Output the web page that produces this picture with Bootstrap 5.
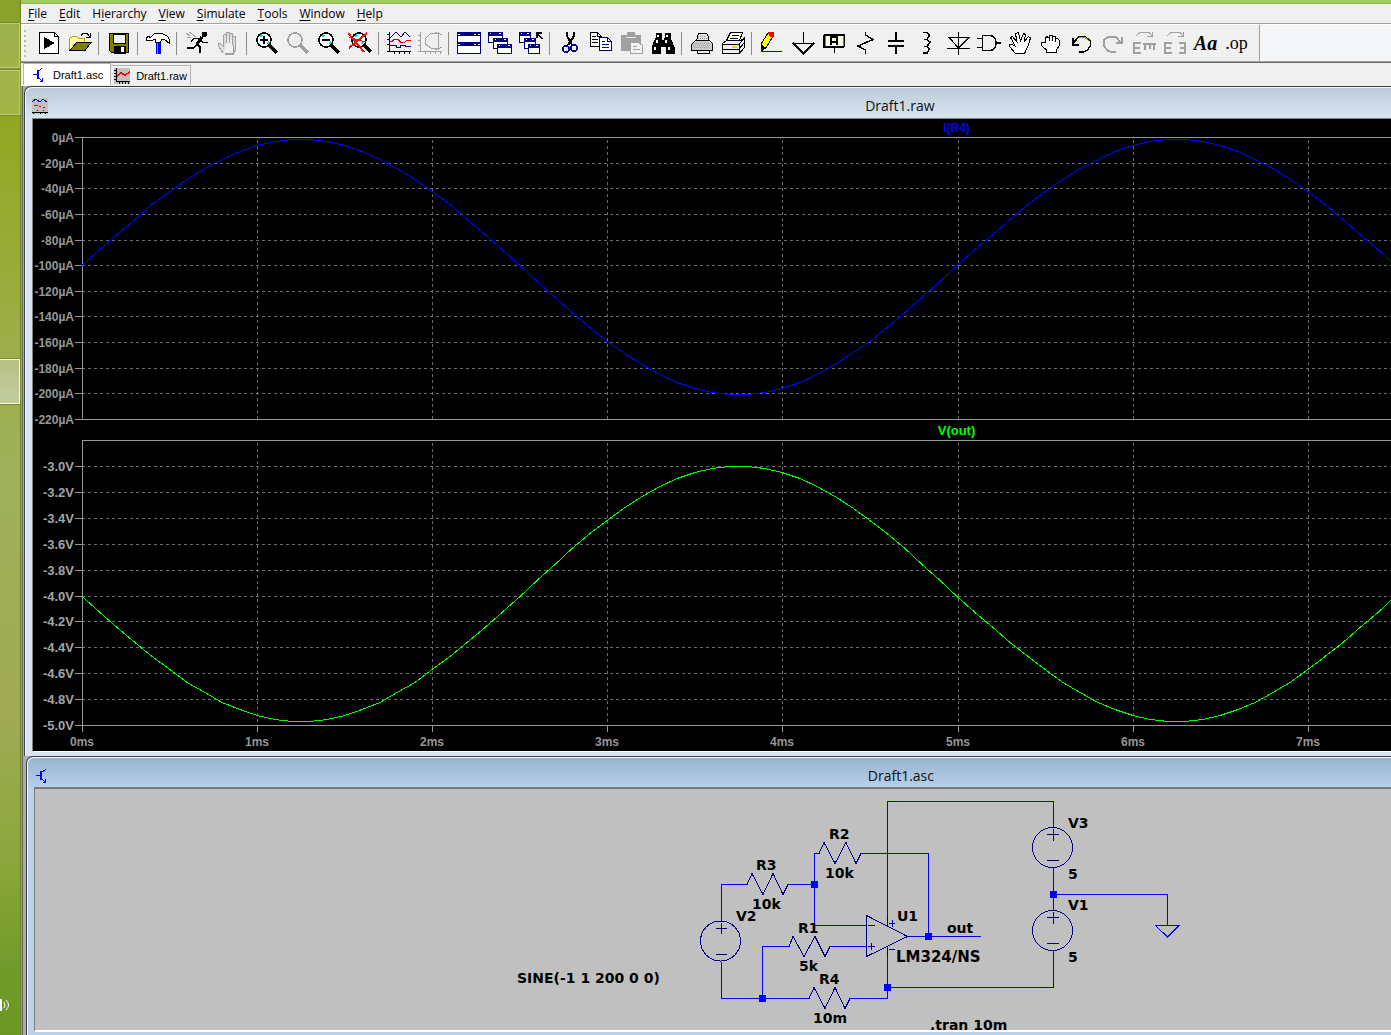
<!DOCTYPE html>
<html lang="en">
<head>
<meta charset="utf-8">
<meta name="viewport" content="width=device-width, initial-scale=1">
<title>Draft1 - circuit simulator</title>
<link href="https://cdn.jsdelivr.net/npm/bootstrap@5.3.0/dist/css/bootstrap.min.css" rel="stylesheet">
<style>
  body { font-family: "Open Sans", "Noto Sans", sans-serif; font-size: 12px; line-height: 16px; color: #000; background: #f0f0f0; }
  .desk { width: 21px; background: linear-gradient(#8ba02a 0, #92a824 13%, #9cae45 32%, #a0b05a 45%, #9fab54 70%, #8aa63a 84%, #70992a 94%, #6d9724 100%); border-right: 1px solid #6f8220; padding-top: 23px; }
  .task-btn { display: block; width: 20px; height: 45px; margin-bottom: 2px; padding: 0; border: 1px solid #bccb7a; border-left: 0; background: rgba(255,255,255,.16); outline: 1px solid #7d8f2c; outline-offset: 0; }
  .task-btn.active-task { margin-top: 242px; background: linear-gradient(#b7c184, #c3cca0); border-color: #f4f7e4; }
  .tray { margin-top: auto; margin-bottom: 22px; }
  .frame-top { height: 4px; background: #a3cc60; border-bottom: 1px solid #8fb850; }
  .menu-strip { height: 20px; padding-left: 7px; column-gap: 12px; border-bottom: 1px solid #a0a0a0; }
  .menu-strip a { color: #000; text-decoration: none; }
  .menu-strip u { text-underline-offset: 2px; }
  .tool-strip { height: 38px; padding-left: 3px; border-top: 1px solid #fff; border-bottom: 1px solid #a0a0a0; background: #f5f6f8; }
  .tool-band { background: #f0f0f0; border-right: 1px solid #a0a0a0; padding: 0 7px 0 0; }
  .grip { width: 2px; height: 27px; margin-right: 7px; background: repeating-linear-gradient(#bcbcbc 0 2px, transparent 2px 5px); }
  .tool-band button { width: 31px; height: 34px; padding: 0; border: 0; background: none; display: flex; align-items: center; justify-content: center; }
  .tool-band .rule { width: 1px; height: 23px; margin: 0 4px 0 3px; background: #8c8c8c; }
  .tool-band svg, .doc-tabs svg, .title-strip svg, .sheet-svg { shape-rendering: crispEdges; }
  .tool-band svg { width: 24px; height: 24px; fill: none; stroke: #000; stroke-width: 1; }
  .tool-band .script-face { font: italic bold 20px/24px "Liberation Serif", serif; }
  .tool-band .op-face { font: 18px/24px "Liberation Serif", serif; }
  .doc-tabs { height: 24px; border-top: 1px solid #696969; padding-left: 2px; background: #f0f0f0; font: 11px/16px "Liberation Sans", sans-serif; }
  .doc-tabs a { color: #000; text-decoration: none; border: 1px solid #b4b4b4; border-bottom: 0; column-gap: 6px; }
  .doc-tabs .front-tab { height: 22px; margin-top: 0; padding: 0 7px; background: #fff; }
  .doc-tabs .back-tab { height: 20px; margin-top: 2px; padding: 0 3px; border-left: 0; }
  .mdi { border-left: 1px solid #a0a0a0; box-shadow: inset 1px 0 #606060; padding-left: 2px; background: #ababab; overflow: hidden; }
  .mdi-win { width: 128%; border: 1px solid #404040; border-right: 0; border-bottom: 0; border-radius: 7px 0 0 0; padding: 0 0 4px 7px; box-shadow: inset 1px 1px #f4f8fc; }
  .mdi-win .title-strip { display: grid; grid-template-columns: 24px 1fr 30px; align-items: center; font-size: 14px; height: 31px; padding-top: 7px; color: #111; }
  .win-plot { background: linear-gradient(#bccad8 0, #d9e5f2 32px); }
  .win-sheet { background: linear-gradient(#98b3d1 0, #b9d1ea 32px); margin-left: 2px; }
  .win-sheet .title-strip { grid-template-columns: 22px 1fr 30px; height: 30px; }
  .pane { border: 1px solid #808080; border-width: 1px 0 1px 1px; border-bottom-color: #fff; }
  .plot-pane { background: #000; height: 634px; }
  .sheet-pane { background: #c0c0c0; height: 245px; border-width: 2px 0 2px 1px; border-color: #7a7a7a; border-bottom-color: #fff; }
  svg.surface { display: block; width: 100%; height: 100%; overflow: hidden; }
  svg.sheet-svg { overflow: visible; }
  .plot-pane text { font: bold 12px "Liberation Sans", sans-serif; fill: #969696; }
  .plot-pane .lower text { font-size: 13px; fill: #a4a4a4; }
  .plot-pane .axis { stroke: #969696; fill: none; }
  .plot-pane .dashes { stroke: #6c6c6c; stroke-dasharray: 3 3; }
  .plot-pane .trace { fill: none; stroke-width: 1; }
  .sheet-svg text { font: bold 14px "DejaVu Sans", sans-serif; fill: #000; }
  .sheet-svg .model-name { font-size: 15px; }
  .sheet-svg .wire { stroke: #0000ff; fill: none; }
  .sheet-svg .part { stroke: #000080; fill: none; }
  .sheet-svg .node { fill: #0000ff; }
</style>
<script src="https://cdn.jsdelivr.net/npm/bootstrap@5.3.0/dist/js/bootstrap.bundle.min.js"></script>
</head>
<body>
<div class="d-flex vh-100 overflow-hidden">
  <aside class="desk d-flex flex-column flex-shrink-0">
    <button class="task-btn" aria-label="Task 1"></button>
    <button class="task-btn" aria-label="Task 2"></button>
    <button class="task-btn active-task" aria-label="Task 3"></button>
    <svg class="tray" width="12" height="16" fill="none" stroke="#fff"><path d="M0 5V11M1 2V14" stroke-width="2"/><path d="M4 5Q6 8 4 11M6 3Q11 8 6 13"/></svg>
  </aside>

  <main class="flex-grow-1 d-flex flex-column" style="min-width:0">
    <div class="frame-top flex-shrink-0"></div>
    <nav class="menu-strip d-flex align-items-center flex-shrink-0">
      <a href="#"><u>F</u>ile</a><a href="#"><u>E</u>dit</a><a href="#">H<u>i</u>erarchy</a><a href="#"><u>V</u>iew</a><a href="#"><u>S</u>imulate</a><a href="#"><u>T</u>ools</a><a href="#"><u>W</u>indow</a><a href="#"><u>H</u>elp</a>
    </nav>

    <div class="tool-strip d-flex flex-shrink-0">
      <div class="tool-band d-flex align-items-center">
        <span class="grip"></span>
        <button aria-label="New schematic"><svg><path d="M2.500 1.500H17.500L21.500 5.500V22.500H2.500Z" fill="#fff"/><path d="M17.500 1.500V5.500H21.500"/><path d="M7 6L18 12L7 18Z" fill="#000" stroke="none"/></svg></button>
        <button aria-label="Open"><svg><path d="M1.500 18.500V7.500L4.500 5.500H8.500L10.500 7.500H16.500V11.500H8.500L2.500 19.500" fill="#ffff9c" stroke="#b0a000"/><path d="M2 19.500L8.500 11.500H23L17 19.500Z" fill="#808000"/><path d="M13 4.500L15 2.500H19L22 6M22.500 2V6.500H18"/></svg></button>
        <span class="rule"></span>
        <button aria-label="Save"><svg><path d="M2.500 2.500H21.500V21.500H4.500L2.500 19.500Z" fill="#808000"/><path d="M6 3H18V12H6Z" fill="#f0f0f0"/><path d="M7 15H18V22H7Z" fill="#000"/><path d="M14 16H17V21H14Z" fill="#fff" stroke="none"/></svg></button>
        <span class="rule"></span>
        <button aria-label="Control panel"><svg><path d="M.500 6.500L2.500 5.500L4.500 6.500L8.500 2.500H16.500L21.500 5.500L23.500 8.500V12.500L18.500 8.500H15.500L14.500 11.500H9.500V8.500L4.500 9.500L.500 9.500Z" fill="#fff"/><path d="M10 12H15V23H10Z" fill="#0000e0" stroke="none"/><path d="M11.500 12V23" stroke="#7080ff"/></svg></button>
        <span class="rule"></span>
        <button aria-label="Run"><svg><path d="M17 1H22V4L20 6H17Z" fill="#000" stroke="none"/><path d="M17 6L12 13" stroke-width="3"/><path d="M12 13L15 16V22M12 14L8 17H2M15 7.500H9L6 10M16 9L18 11.500H23" stroke-width="1.500"/><path d="M1 2L5 5M4 1L11 6M2 6H6" stroke="#a0a0a0"/></svg></button>
        <button aria-label="Halt"><svg style="stroke:#a0a0a0"><path d="M7.500 22.500L2.500 15.500V12.500H4.500L7.500 15.500V4.500L8.500 3.500H10.500V12M10.500 3.500V1.500H13.500V12M13.500 2.500H16.500V12M16.500 5.500H19.500V18.500L17.500 22.500Z" fill="#dcdcdc"/><path d="M9 22.500H17" stroke-width="2"/></svg></button>
        <span class="rule"></span>
        <button aria-label="Zoom in"><svg><circle cx="9" cy="9" r="7" fill="#fff" stroke-width="1.600"/><path d="M5 6L7 4M12 13L14 11" stroke="#00e0e0" stroke-width="2"/><path d="M9 5V13M5 9H13" stroke-width="2"/><path d="M14 14L22 22" stroke-width="3.500"/></svg></button>
        <button aria-label="Pan"><svg style="stroke:#a0a0a0"><circle cx="9" cy="9" r="7" fill="#ececec" stroke-width="1.600"/><path d="M5 8L8 5" stroke="#fff" stroke-width="2"/><path d="M14 14L22 22" stroke-width="3.500"/></svg></button>
        <button aria-label="Zoom out"><svg><circle cx="9" cy="9" r="7" fill="#fff" stroke-width="1.600"/><path d="M5 6L7 4M12 13L14 11" stroke="#00e0e0" stroke-width="2"/><path d="M5 9H13" stroke-width="2"/><path d="M14 14L22 22" stroke-width="3.500"/></svg></button>
        <button aria-label="Zoom full"><svg><circle cx="11" cy="9" r="7" fill="#fff" stroke-width="1.600"/><path d="M7 6L9 4M13 13L15 11" stroke="#00e0e0" stroke-width="2"/><path d="M16 14L23 21" stroke-width="3.500"/><path d="M0 2L16 21M19 2L1 17" stroke="#f01010" stroke-width="2"/><path d="M1 6L17 11" stroke="#f01010"/></svg></button>
        <span class="rule"></span>
        <button aria-label="Autorange"><svg><path d="M2.500 1V20.500H24M0 3.500H3M0 8.500H3M0 13.500H3M0 20.500H3M7.500 20V23M12.500 20V23M17.500 20V23M22.500 20V23"/><path d="M3 7L9 1L14 6L18 1L23 6" stroke="#000080"/><path d="M3 10.500H5L7 8.500H11L14 11.500H17L20 9.500H24" stroke="#e00000"/><path d="M3 14.500H9V16.500H13V14.500H18V15.500H24" stroke="#000080"/></svg></button>
        <button aria-label="Pick traces"><svg style="stroke:#a0a0a0"><path d="M2.500 1V20.500H24M0 4.500H3M0 9.500H3M0 14.500H3M0 20.500H3M7.500 20V23M12.500 20V23M17.500 20V23M22.500 20V23"/><path d="M20 2L13 2L7 8V13L13 17L20 18M20.500 1V19M17 1L24 4M17 19L24 16"/></svg></button>
        <span class="rule"></span>
        <button aria-label="Tile"><svg style="stroke:#000080"><path d="M.500 1.500H23.500V22.500H.500Z" fill="#fff"/><path d="M1 3H23M1 13H23" stroke-width="4"/><path d="M17 3H19M21 3H23M17 13H19M21 13H23M1 3H3M1 13H3" stroke="#fff"/></svg></button>
        <button aria-label="Cascade"><svg style="stroke:#000080"><g fill="#fff"><path d="M.500 1.500H14.500V11.500H.500Z"/><path d="M5.500 7.500H19.500V17.500H5.500Z"/><path d="M9.500 13.500H23.500V22.500H9.500Z"/></g><path d="M1 3H14M6 9H19M10 15H23" stroke-width="3"/><path d="M11 2.500H13M16 8.500H18M20 14.500H22M2 2.500H3M7 8.500H8M11 14.500H12" stroke="#fff"/></svg></button>
        <button aria-label="Close all"><svg style="stroke:#000080"><g fill="#fff"><path d="M.500 1.500H11.500V11.500H.500Z"/><path d="M5.500 7.500H16.500V17.500H5.500Z"/><path d="M9.500 13.500H20.500V22.500H9.500Z"/></g><path d="M1 3H11M6 9H16M10 15H20" stroke-width="3"/><path d="M8 2.500H10M13 8.500H15M17 14.500H19M2 2.500H3M7 8.500H8M11 14.500H12" stroke="#fff"/><path d="M23 8L18 2M18 7V2H23" stroke="#000" stroke-width="1.500"/></svg></button>
        <span class="rule"></span>
        <button aria-label="Cut"><svg><path d="M9 1V5L14 14M16 1V5L10 14" stroke-width="2"/><g stroke="#000080" stroke-width="1.500"><circle cx="8" cy="18" r="3"/><circle cx="16" cy="17" r="3"/></g></svg></button>
        <button aria-label="Copy"><svg><path d="M1.500 1.500H8.500L12.500 5.500V15.500H1.500Z" fill="#fff"/><path d="M8.500 1.500V5.500H12.500M3 5.500H7M3 8.500H9M3 11.500H9"/><path d="M10.500 6.500H18.500L22.500 10.500V19.500H10.500Z" fill="#fff" stroke="#000080"/><path d="M18.500 6.500V10.500H22.500M13 10.500H16M13 13.500H20M13 16.500H20" stroke="#000080"/></svg></button>
        <button aria-label="Paste"><svg style="stroke:#a0a0a0"><path d="M1 4H7V1H15V4H21V20H1Z" fill="#a0a0a0" stroke="none"/><path d="M6 6.500H16" stroke="#e8e8e8"/><path d="M10.500 11.500H18.500L22.500 14.500V22.500H10.500Z" fill="#f4f4f4"/><path d="M13 15.500H17M13 18.500H20"/></svg></button>
        <button aria-label="Find"><svg><path d="M5 2H10V7L11 9H13L14 7V2H19V7L23 16V22H15V15H9V22H1V16L5 7Z" fill="#000"/><path d="M7 4V6M16 4V6M6 9V12M15 9V12M4 16V19M18 16V19" stroke="#fff" stroke-width="2"/></svg></button>
        <span class="rule"></span>
        <button aria-label="Print preview"><svg><path d="M6.500 9.500L8.500 2.500H16.500L18.500 5.500V9.500" fill="#e4e4e4"/><path d="M1.500 13.500L5.500 9.500H19.500L22.500 12.500V19.500H1.500Z" fill="#ccc"/><path d="M7 20V22.500H19V20"/><path d="M4 12.500H20M3 14.500H21M4 16.500H20M8 5.500H15M8 7.500H17" stroke="#999" stroke-dasharray="1 1"/></svg></button>
        <button aria-label="Print"><svg><path d="M5.500 9.500L9.500 1.500H21.500L18.500 9.500Z" fill="#fff"/><path d="M11 4.500H18M9 7.500H17"/><path d="M1.500 12.500L5.500 9.500H20L23.500 6.500V16.500L18.500 22.500H1.500ZM1 13.500H18V22M18 13L23 8M18 18L23 12M2 18.500H18" fill="#eee"/><path d="M11 16H16" stroke="#d8d800" stroke-width="2"/></svg></button>
        <span class="rule"></span>
        <button aria-label="Wire"><svg><path d="M1 13L8 2L13 5L6 17L1 20Z" fill="#ffff00"/><path d="M1 14V20L6 17Z" fill="#000"/><path d="M8 1H13V5H10Z" fill="#f00000" stroke="#f00000"/><path d="M1 20.500H22" stroke="#0000ff"/></svg></button>
        <button aria-label="Ground"><svg><path d="M12.500 1V12M1 12.500H24M2 12L12.500 22.500L23 12" stroke-width="1.500"/></svg></button>
        <button aria-label="Label net"><svg><rect x="2" y="4" width="20" height="12" rx="1" fill="#ffffe4" stroke-width="2"/><path d="M3.500 5V15M21.500 5V15" stroke="#909000"/><path d="M9 14V6H15V14M9 10.500H15" stroke-width="2"/><path d="M12.500 16V22" stroke-width="1.500"/></svg></button>
        <button aria-label="Resistor"><svg><path d="M12.500 1V4L20 8.500L5 15L12.500 19V23" stroke-width="1.500"/></svg></button>
        <button aria-label="Capacitor"><svg><path d="M12 1V9M12 16V23" stroke-width="2"/><path d="M4 10H20M4 15H20" stroke-width="2"/></svg></button>
        <button aria-label="Inductor"><svg><path d="M8 1.500H12L14.500 4L12 8.500H9M12 8.500L15 11L12 15.500H9M12 15.500L14.500 18L12 22H8" stroke-width="1.500"/></svg></button>
        <button aria-label="Diode"><svg><path d="M12.500 1V24M2 6.500H23L12.500 17L3 6.500M1 17.500H24" stroke-width="1.200"/></svg></button>
        <button aria-label="Component"><svg><path d="M5.500 4.500H13Q19 5 19 12Q19 19 13 19.500H5.500ZM0 7.500H6M0 16.500H6" stroke-width="1.500"/><path d="M19 12H24" stroke-width="2"/></svg></button>
        <button aria-label="Move"><svg><path d="M7.500 22.500L1.500 15.500V13.500H4.500L7 15L2.500 6.500L4.500 5.500L9 11L7.500 2.500L10.500 1.500L12.500 10L15.500 2.500L17.500 3.500L16 11L20.500 5.500L22.500 7L20 15L16.500 22.500Z" fill="#fff"/></svg></button>
        <button aria-label="Drag"><svg><path d="M7.500 21.500V19L2.500 14.500V11.500H6V7.500L8 5.500L10 7V4.500H13V7L14 5.500H16.500V8L18 7L20.500 9.500V14.500L17.500 18.500V21.500Z" fill="#fff"/><path d="M10.500 7V10M13.500 7V10M16.500 8V11"/></svg></button>
        <button aria-label="Undo"><svg><path d="M4 11L9 5.500H15L20.500 10V15L17 19.500L13 21H9" stroke-width="1.500"/><path d="M9 6.500H15L19 10" stroke="#a0a000"/><path d="M2.500 7V13.500H9M2 13L6 9" stroke-width="2"/></svg></button>
        <button aria-label="Redo"><svg style="stroke:#a0a0a0"><path d="M19 11L15 5.500H8L3 9V15L7 20L11 21H15" stroke-width="2"/><path d="M21 6V12H15" stroke-width="2"/></svg></button>
        <button aria-label="Mirror"><svg style="stroke:#a0a0a0"><path d="M4 5L8 1.500H17L20 5M20.500 1V5.500H15"/><path d="M9 12H2V22H9M2 17H8M11 13H24M13 13V19M18 13V18M22 13V19" stroke-width="2.500"/></svg></button>
        <button aria-label="Rotate"><svg style="stroke:#a0a0a0"><path d="M4 5L8 1.500H17L20 5M20.500 1V5.500H15"/><path d="M9 12H2V22H9M2 17H8M16 12H22V22H16M22 17H17" stroke-width="2.500"/></svg></button>
        <button class="script-face" aria-label="Text">Aa</button>
        <button class="op-face" aria-label="SPICE directive">.op</button>
      </div>
    </div>

    <nav class="doc-tabs d-flex flex-shrink-0">
      <a href="#" class="front-tab d-flex align-items-center"><svg width="16" height="16" fill="none" stroke="#0000ff"><path d="M2 7.500H6M11 1L7 5M7 10L11 14M9 14.500H12M11.500 11V15"/><path d="M7 3V12" stroke-width="2"/></svg>Draft1.asc</a>
      <a href="#" class="back-tab d-flex align-items-center"><svg width="16" height="16" fill="none" stroke="#000"><rect width="16" height="16" fill="#c0c0c0" stroke="none"/><path d="M2.500 0V13.500H16M0 2.500H2M0 5.500H2M0 8.500H2M0 11.500H2M5.500 13V16M8.500 13V16M11.500 13V16M14.500 13V16"/><path d="M3 8L7 5L11 7L16 4" stroke="#f00000" stroke-width="1.500"/></svg>Draft1.raw</a>
    </nav>

    <section class="mdi flex-grow-1">
      <div class="mdi-win win-plot">
        <div class="title-strip"><svg width="16" height="16" fill="none" stroke="#000"><rect width="16" height="16" fill="#c0c0c0" stroke="none"/><path d="M0 14.500H16M1.500 14V16M8.500 14V16M13.500 14V16"/><path d="M0 4L4 1L8 4L11 1L15 4M5 12.500H6M11 12.500H12" stroke="#0000ff"/><path d="M2 7.500H6M7 8.500H9M11 9.500H13" stroke="#ff0000"/></svg><span class="text-center">Draft1.raw</span></div>
        <div class="pane plot-pane"><svg class="surface" id="plot"></svg></div>
      </div>
      <div class="mdi-win win-sheet">
        <div class="title-strip"><svg width="16" height="16" fill="none" stroke="#0000ff"><path d="M2 7.500H6M12 1L7 5M7 10L12 15M9 14.500H12M11.500 11V15"/><path d="M7 3V12" stroke-width="2"/></svg><span class="text-center">Draft1.asc</span></div>
        <div class="pane sheet-pane">
          <svg class="surface sheet-svg"><g transform="translate(-35 -789)">
            <g class="wire">
              <path d="M721.500 921V884.500H747M788 884.500H814M819 853.500H814.500V925.500H866M861 853.500H928.500V936M907 936.500H981"/>
              <path d="M1053.500 827V801.500H887.500V916M887.500 956V998.500H850M887 987.500H1053.500V951M809 998.500H721.500V962M762.500 998V946.500H789M830 946.500H866"/>
              <path d="M1053.500 867V910M1053 894.500H1167.500V925.500M1155 925.500H1179L1167.500 937L1155.500 925.500"/>
            </g>
            <g class="part">
              <path d="M747 884.500L752 873.500L763 894.500L773 873.500L783 894.500L788 884.500"/>
              <path d="M819 853.500L824 842.500L835 863.500L846 842.500L856 863.500L861 853.500"/>
              <path d="M789 946.500L793 936.500L804 956.500L815 936.500L825 956.500L830 946.500"/>
              <path d="M809 998.500L814 987.500L825 1008.500L835 987.500L845 1008.500L850 998.500"/>
              <circle cx="720.500" cy="941" r="20"/><path d="M716 928.500H727M721.500 923V934M716 954.500H727"/>
              <circle cx="1052.500" cy="847.500" r="20"/><path d="M1047 834.500H1059M1053.500 829V841M1047 860.500H1059"/>
              <circle cx="1052.500" cy="930.500" r="20"/><path d="M1047 917.500H1059M1053.500 912V924M1047 943.500H1059"/>
              <path d="M866.500 915.500V956.500L907.500 936.500ZM868 925.500H875M868 946.500H875M871.500 943V950M889 923.500H895M892.500 920V927M889 949.500H895M887.500 916V926M887.500 946V956"/>
            </g>
            <g class="node"><rect x="811" y="881" width="7" height="7"/><rect x="925" y="933" width="7" height="7"/><rect x="884" y="984" width="7" height="7"/><rect x="759" y="995" width="7" height="7"/><rect x="1050" y="891" width="7" height="7"/></g>
            <text x="829" y="839">R2</text><text x="825" y="878">10k</text>
            <text x="756" y="870">R3</text><text x="752" y="909">10k</text>
            <text x="736" y="921">V2</text><text x="798" y="933">R1</text><text x="799" y="971">5k</text>
            <text x="819" y="984">R4</text><text x="813" y="1023">10m</text>
            <text x="897" y="921">U1</text><text x="896" y="962" class="model-name">LM324/NS</text><text x="947" y="933">out</text>
            <text x="1068" y="828">V3</text><text x="1068" y="879">5</text><text x="1068" y="910">V1</text><text x="1068" y="962">5</text>
            <text x="517" y="983">SINE(-1 1 200 0 0)</text><text x="930" y="1030">.tran 10m</text>
          </g></svg>
        </div>
      </div>
    </section>
  </main>
</div>
<script>
  // Two stacked panes on one time axis: R4 current above, output voltage below.
  const left = 49, msWidth = 175.1, right = left + 10 * msWidth;
  const line = (c, x1, y1, x2, y2) => `<path class="${c}" shape-rendering="crispEdges" d="M${x1} ${y1}L${x2} ${y2}"/>`;
  const half = v => Math.round(v) + 0.5;
  function pane(o) {
    let s = `<g class="${o.name}">`;
    for (let ms = 1; ms < 10; ms++) {
      const x = half(left + ms * msWidth);
      s += line('dashes', x, o.top + 3, x, o.bottom);
      if (o.times) s += line('axis', x, o.bottom, x, o.bottom + 7);
    }
    o.ticks.forEach(([y, t]) => {
      const edge = y === o.top || y === o.bottom;
      s += line('axis', left - 7, y + .5, left, y + .5);
      if (!edge) s += line('dashes', left, y + .5, right, y + .5);
      s += `<text x="41" y="${y + 5}" text-anchor="end">${t}</text>`;
    });
    s += line('axis', left, o.top + .5, right, o.top + .5) + line('axis', left, o.bottom + .5, right, o.bottom + .5);
    s += line('axis', left + .5, o.top, left + .5, o.bottom + (o.times ? 7 : 0));
    let d = '';
    for (let ms = 0; ms <= 10; ms += 0.1) {
      const v = Math.sin(2 * Math.PI * ms / 5) * o.sign;
      d += (d ? 'L' : 'M') + Math.round(left + ms * msWidth) + ' ' + (Math.round(o.zero - v * (v > 0 ? o.up : o.down)) + .5);
    }
    s += `<path class="trace" shape-rendering="crispEdges" stroke="${o.color}" d="${d}"/>`;
    s += `<text x="${(left + right) / 2 - 1}" y="${o.titleY}" text-anchor="middle" style="fill:${o.color}">${o.title}</text></g>`;
    return s;
  }
  const upper = [], lower = [];
  for (let i = 0; i <= 11; i++) upper.push([Math.round(18 + i * 25.636), (i ? -20 * i : 0) + 'µA']);
  for (let i = 0; i <= 10; i++) lower.push([Math.round(347 + i * 25.9), (-3 - i * 0.2).toFixed(1) + 'V']);
  const plot = document.getElementById('plot');
  const visible = window.innerWidth - plot.getBoundingClientRect().left;
  let out = pane({name: 'upper', top: 18, bottom: 300, ticks: upper, zero: 146, up: 126, down: 129, sign: 1, color: '#0000ff', title: 'I(R4)', titleY: 13});
  out += pane({name: 'lower', top: 321, bottom: 606, ticks: lower, zero: 477, up: 130, down: 125, sign: -1, color: '#00ff00', title: 'V(out)', titleY: 316, times: true});
  // Time labels only where they fit in the visible part of the window.
  for (let ms = 0; left + ms * msWidth < visible - 14; ms++) out += `<text x="${Math.round(left + ms * msWidth)}" y="627" text-anchor="middle">${ms}ms</text>`;
  plot.innerHTML = out;
</script>
</body>
</html>
